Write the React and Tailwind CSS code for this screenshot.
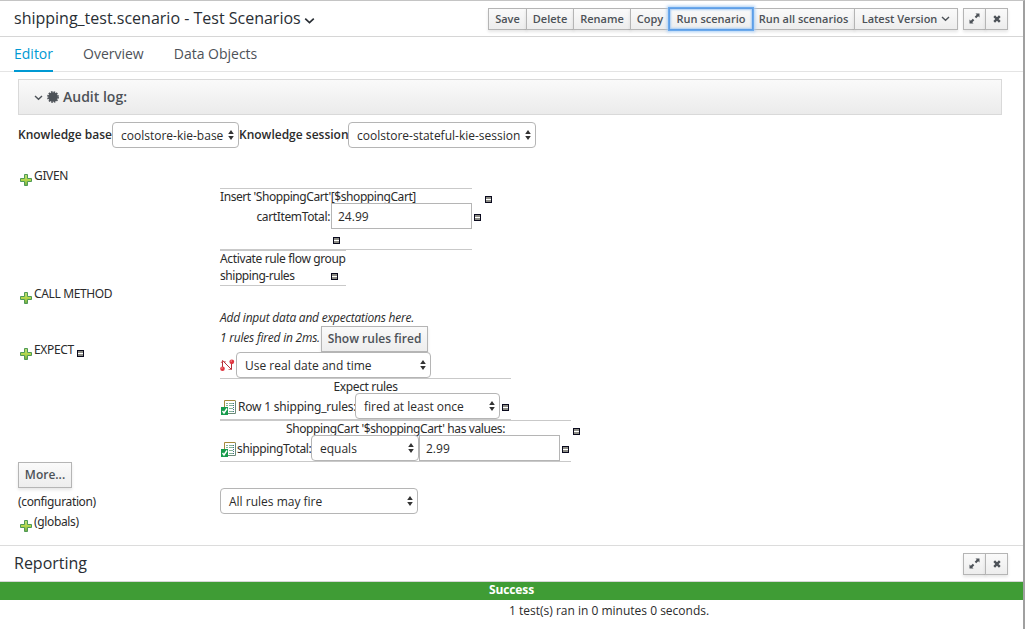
import React from 'react';

const UI = "font-['Open_Sans','Noto_Sans',sans-serif]";
const DOC = "font-['Noto_Sans','Open_Sans',sans-serif]";

function Plus() {
  return (
    <svg width="12" height="12" viewBox="0 0 12 12" className="shrink-0">
      <defs>
        <linearGradient id="plus" x1="0" y1="0" x2="0" y2="1">
          <stop offset="0" stopColor="#b9dc7c" />
          <stop offset="0.5" stopColor="#b4d84a" />
          <stop offset="1" stopColor="#6fa848" />
        </linearGradient>
      </defs>
      <path d="M4.5.5h3v4h4v3h-4v4h-3v-4h-4v-3h4z" fill="url(#plus)" stroke="#4f9a55" />
    </svg>
  );
}

function Minus({ className = '' }) {
  return (
    <svg width="7" height="7" viewBox="0 0 7 7" className={'shrink-0 ' + className}>
      <path d="M0 0h7v7H0z" fill="#0a0a1e" />
      <path d="M1 1h5v5H1z" fill="#8d8d85" />
      <path d="M1 3h5v1H1z" fill="#fff" />
    </svg>
  );
}

function Sheet() {
  return (
    <svg width="15" height="15" viewBox="0 0 15 15" className="shrink-0">
      <path d="M3.500.500h11v13h-11z" fill="#fff" />
      <path d="M3.500 7V.500h11" fill="none" stroke="#a58a3c" />
      <path d="M14.500 1v12.500H7" fill="none" stroke="#6b8a78" />
      <path d="M5 3.500h2M5 5.500h2M8 3.500h4M8 5.500h4M8 8.500h4M8 11.500h4" stroke="#86b59a" />
      <path d="M12.500 3v9" stroke="#3f6f8a" strokeDasharray="1 1" />
      <path d="M0 7h7v8H0z" fill="#169b4c" />
      <path d="M1.500 11l1.500 2 3-4.500" fill="none" stroke="#fff" strokeWidth="1.400" />
    </svg>
  );
}

function Clock() {
  return (
    <svg width="15" height="13" viewBox="0 0 15 13" className="shrink-0">
      <path d="M2.500 10V1.500l9 9V3" fill="none" stroke="#b5303a" />
      <path d="M1 4L2.500 2 6 3M8.500 10.500h3" fill="none" stroke="#c9565c" strokeWidth=".8" />
      <circle cx="2.500" cy="9.800" r="2.300" fill="#e0343f" />
      <circle cx="11.800" cy="2.800" r="2.400" fill="#e0343f" />
      <circle cx="2" cy="9" r=".8" fill="#f4949a" />
      <circle cx="11.200" cy="2" r=".8" fill="#f4949a" />
    </svg>
  );
}

function Chevron({ size = 9, className = '' }) {
  return (
    <svg width={size} height={size} viewBox="0 0 9 9" className={'shrink-0 ' + className}>
      <path d="M1 3l3.500 3.200L8 3" fill="none" stroke="currentColor" strokeWidth="1.400" />
    </svg>
  );
}

function Select({ className, children }) {
  return (
    <div className={`flex h-[26px] shrink-0 items-center justify-between rounded-[4px] border border-[#b5b5b5] bg-white pr-[4px] pl-2 text-[12px] tracking-normal whitespace-nowrap ${UI} ${className}`}>
      <span className="pt-[2px]">{children}</span>
      <svg width="6" height="10" viewBox="0 0 6 10" className="shrink-0">
        <path d="M3 0l2.800 4H.2zM3 10l2.800-4H.2z" fill="#333" />
      </svg>
    </div>
  );
}

function Field({ children }) {
  return (
    <div className={`flex h-[26px] w-[141px] shrink-0 items-center border border-[#b5b5b5] bg-white pt-px pl-1.5 text-[12px] tracking-normal ${UI}`}>
      {children}
    </div>
  );
}

const BTN_BASE = 'flex items-center justify-center whitespace-nowrap border bg-gradient-to-b from-[#fafafa] to-[#ededed] font-semibold text-[#4d5258] tracking-normal shrink-0';
const BTN = `${BTN_BASE} border-[#b5b5b5] shadow-[0_2px_3px_rgba(3,3,3,0.1)]`;
const BTN_FOCUS = `${BTN_BASE} relative z-10 border-[#5e9ee6] shadow-[0_0_0_1px_#6ba9ec,0_0_3px_2px_#a9cdf4,inset_0_0_2px_1px_#a9cdf4]`;

function ToolButton({ className = '', focused = false, children }) {
  return <div className={`${focused ? BTN_FOCUS : BTN} -ml-px h-[22px] text-[11px] ${className}`}>{children}</div>;
}

function WindowButtons() {
  return (
    <div className="flex">
      <ToolButton className="w-[23px]">
        <svg width="11" height="11" viewBox="0 0 11 11">
          <path d="M6.500 .500h4V4.500L9.200 3.300 7.200 5.300 5.700 3.800 7.700 1.800zM4.500 10.500h-4V6.500L1.800 7.700 3.800 5.700 5.300 7.200 3.300 9.200z" fill="#4d5258" />
        </svg>
      </ToolButton>
      <ToolButton className="w-[23px]">
        <svg width="8" height="8" viewBox="0 0 8 8">
          <path d="M1.200 1.200l5.600 5.600M6.800 1.200L1.200 6.800" stroke="#4d5258" strokeWidth="2.400" />
        </svg>
      </ToolButton>
    </div>
  );
}

function Label({ children }) {
  return (
    <div className="flex h-5 items-start pl-0.5">
      <div className="mt-2"><Plus /></div>
      <span className="ml-0.5 leading-5">{children}</span>
    </div>
  );
}

export default function App() {
  return (
    <div className={`flex h-[629px] w-[1025px] flex-col overflow-hidden border-t border-r-2 border-t-[#c4c4c4] border-r-[#a0a0a0] bg-white text-[12px] text-[#2b2b2b] ${UI}`}>
      <header className="flex h-9 shrink-0 items-center justify-between border-b border-[#d6d6d6] pr-[15px] pl-[14px]">
        <div className="flex items-center text-[16px] whitespace-nowrap text-[#292e34]">
          <span className="-mt-px">shipping_test.scenario - Test Scenarios</span>
          <Chevron size={11} className="mt-1 ml-[3px]" />
        </div>
        <div className="flex">
          <ToolButton className="w-[39px]"><span className="pt-px">Save</span></ToolButton>
          <ToolButton className="w-[48px]"><span className="pt-px">Delete</span></ToolButton>
          <ToolButton className="w-[58px]"><span className="pt-px">Rename</span></ToolButton>
          <ToolButton className="w-[40px]"><span className="pt-px">Copy</span></ToolButton>
          <ToolButton focused className="w-[84px]"><span className="pt-px">Run scenario</span></ToolButton>
          <ToolButton className="w-[103px]"><span className="pt-px">Run all scenarios</span></ToolButton>
          <ToolButton className="mr-[6px] w-[104px]">
            <span className="pt-px">Latest Version</span>
            <Chevron size={9} className="ml-1" />
          </ToolButton>
          <WindowButtons />
        </div>
      </header>

      <nav className="flex h-[35px] shrink-0 gap-[30px] border-b border-[#e4e4e4] pl-[14px] text-[14px] leading-[33px] text-[#4d5258]">
        <span className="h-[35px] border-b-2 border-[#0099d3] text-[#0099d3]">Editor</span>
        <span>Overview</span>
        <span>Data Objects</span>
      </nav>

      <main className={`flex h-[474px] shrink-0 flex-col border-b border-[#dcdcdc] px-[18px] pt-[7px] tracking-[-0.36px] ${DOC}`}>
        <div className={`flex h-9 w-[984px] shrink-0 items-center border border-[#d9d9d9] bg-gradient-to-b from-[#fafafa] to-[#ebebeb] pl-[15px] text-[14px] font-semibold tracking-normal text-[#4d5258] ${UI}`}>
          <Chevron size={9} />
          <svg width="12" height="12" viewBox="-6 -6 12 12" className="mr-[4px] ml-[4px]">
            <circle r="4.800" fill="#4d5258" />
            <circle r="5.100" fill="none" stroke="#4d5258" strokeWidth="1.600" strokeDasharray="1.600 1.070" />
          </svg>
          <span className="pb-[2px]">Audit log:</span>
        </div>

        <div className={`mt-[7px] flex h-[26px] items-center text-[12px] font-semibold tracking-normal whitespace-nowrap ${UI}`}>
          <span className="w-[94px]">Knowledge base</span>
          <Select className="w-[127px] font-normal">coolstore-kie-base</Select>
          <span className="w-[109px]">Knowledge session</span>
          <Select className="w-[188px] font-normal">coolstore-stateful-kie-session</Select>
        </div>

        <div className="flex h-[138px] shrink-0 whitespace-nowrap">
          <div className="w-[202px] pt-[18px]"><Label>GIVEN</Label></div>
          <div className="pt-10">
            <div className="flex">
              <div className="h-[62px] w-[252px] border-y border-[#c9c9c9]">
                <div className="h-[14px] leading-[16px] tracking-[-0.42px]">Insert 'ShoppingCart'[$shoppingCart]</div>
                <div className="flex h-[26px] items-center">
                  <span className="w-[111px] shrink-0 pt-px pr-[1px] text-right">cartItemTotal:</span>
                  <Field>24.99</Field>
                  <Minus className="mt-[3px] ml-[2px]" />
                </div>
                <Minus className="mt-2 ml-[113px]" />
              </div>
              <Minus className="mt-2 ml-[13px]" />
            </div>
            <div className="h-9 w-[126px] border-y border-[#c9c9c9]">
              <div className="h-[17px] leading-[16px]">Activate rule flow group</div>
              <div className="flex h-[17px]">
                <span className="w-[111px] leading-[15px] tracking-[-0.45px]">shipping-rules</span>
                <Minus className="mt-[5px]" />
              </div>
            </div>
          </div>
        </div>

        <div className="h-[24px] shrink-0">
          <div className="-mt-[2px]"><Label>CALL METHOD</Label></div>
        </div>

        <div className="flex h-[152px] shrink-0 whitespace-nowrap">
          <div className="flex w-[202px] items-start pt-[30px]">
            <Label>EXPECT</Label>
            <Minus className="mt-[10px] ml-[3px]" />
          </div>
          <div>
            <div className={`h-4 leading-[15px] tracking-[-0.22px] italic ${UI}`}>Add input data and expectations here.</div>
            <div className="flex h-[26px]">
              <span className={`w-[101px] shrink-0 leading-[23px] tracking-[-0.22px] italic ${UI}`}>1 rules fired in 2ms.</span>
              <div className={`${BTN} ${UI} h-[26px] w-[107px] text-[12px]`}>Show rules fired</div>
            </div>
            <div className="flex h-[26px] items-center">
              <Clock />
              <Select className="ml-px w-[195px]">Use real date and time</Select>
            </div>
            <div className="h-[42px] w-[291px] border-y border-[#c9c9c9]">
              <div className="h-[14px] text-center leading-[16px]">Expect rules</div>
              <div className="flex h-[26px] items-center">
                <div className="mt-[3px] ml-px"><Sheet /></div>
                <span className="ml-[2px] w-[117px] shrink-0 pt-px tracking-[-0.2px]">Row 1 shipping_rules:</span>
                <Select className="w-[145px]">fired at least once</Select>
                <Minus className="mt-[3px] ml-[2px]" />
              </div>
            </div>
            <div className="flex">
              <div className="h-[42px] w-[351px] border-y border-[#c9c9c9]">
                <div className="h-[14px] text-center leading-[16px] tracking-[-0.4px]">ShoppingCart '$shoppingCart' has values:</div>
                <div className="flex h-[26px] items-center">
                  <div className="mt-[3px] ml-px"><Sheet /></div>
                  <span className="ml-px w-[74px] shrink-0 pt-px">shippingTotal:</span>
                  <Select className="w-[108px]">equals</Select>
                  <Field>2.99</Field>
                  <Minus className="mt-[3px] ml-[2px]" />
                </div>
              </div>
              <Minus className="mt-2 ml-[2px]" />
            </div>
          </div>
        </div>

        <div className={`${BTN} ${UI} h-[26px] w-[54px] text-[12px]`}>More...</div>
        <div className="flex h-[26px] shrink-0 items-center">
          <span className="w-[202px] pt-[2px]">(configuration)</span>
          <Select className="w-[198px]">All rules may fire</Select>
        </div>
        <div className="-mt-[2px]"><Label>(globals)</Label></div>
      </main>

      <section className="flex h-9 shrink-0 items-center justify-between border-b border-[#d6d6d6] pr-[15px] pl-[14px]">
        <h2 className="-mt-[2px] text-[16px] text-[#292e34]">Reporting</h2>
        <WindowButtons />
      </section>
      <div className="h-[18px] shrink-0 bg-[#3f9c35] text-center text-[12px] leading-[16px] font-bold tracking-[-0.1px] text-white">Success</div>
      <div className={`pl-[509px] leading-[21px] whitespace-nowrap ${UI}`}>1 test(s) ran in 0 minutes 0 seconds.</div>
    </div>
  );
}
